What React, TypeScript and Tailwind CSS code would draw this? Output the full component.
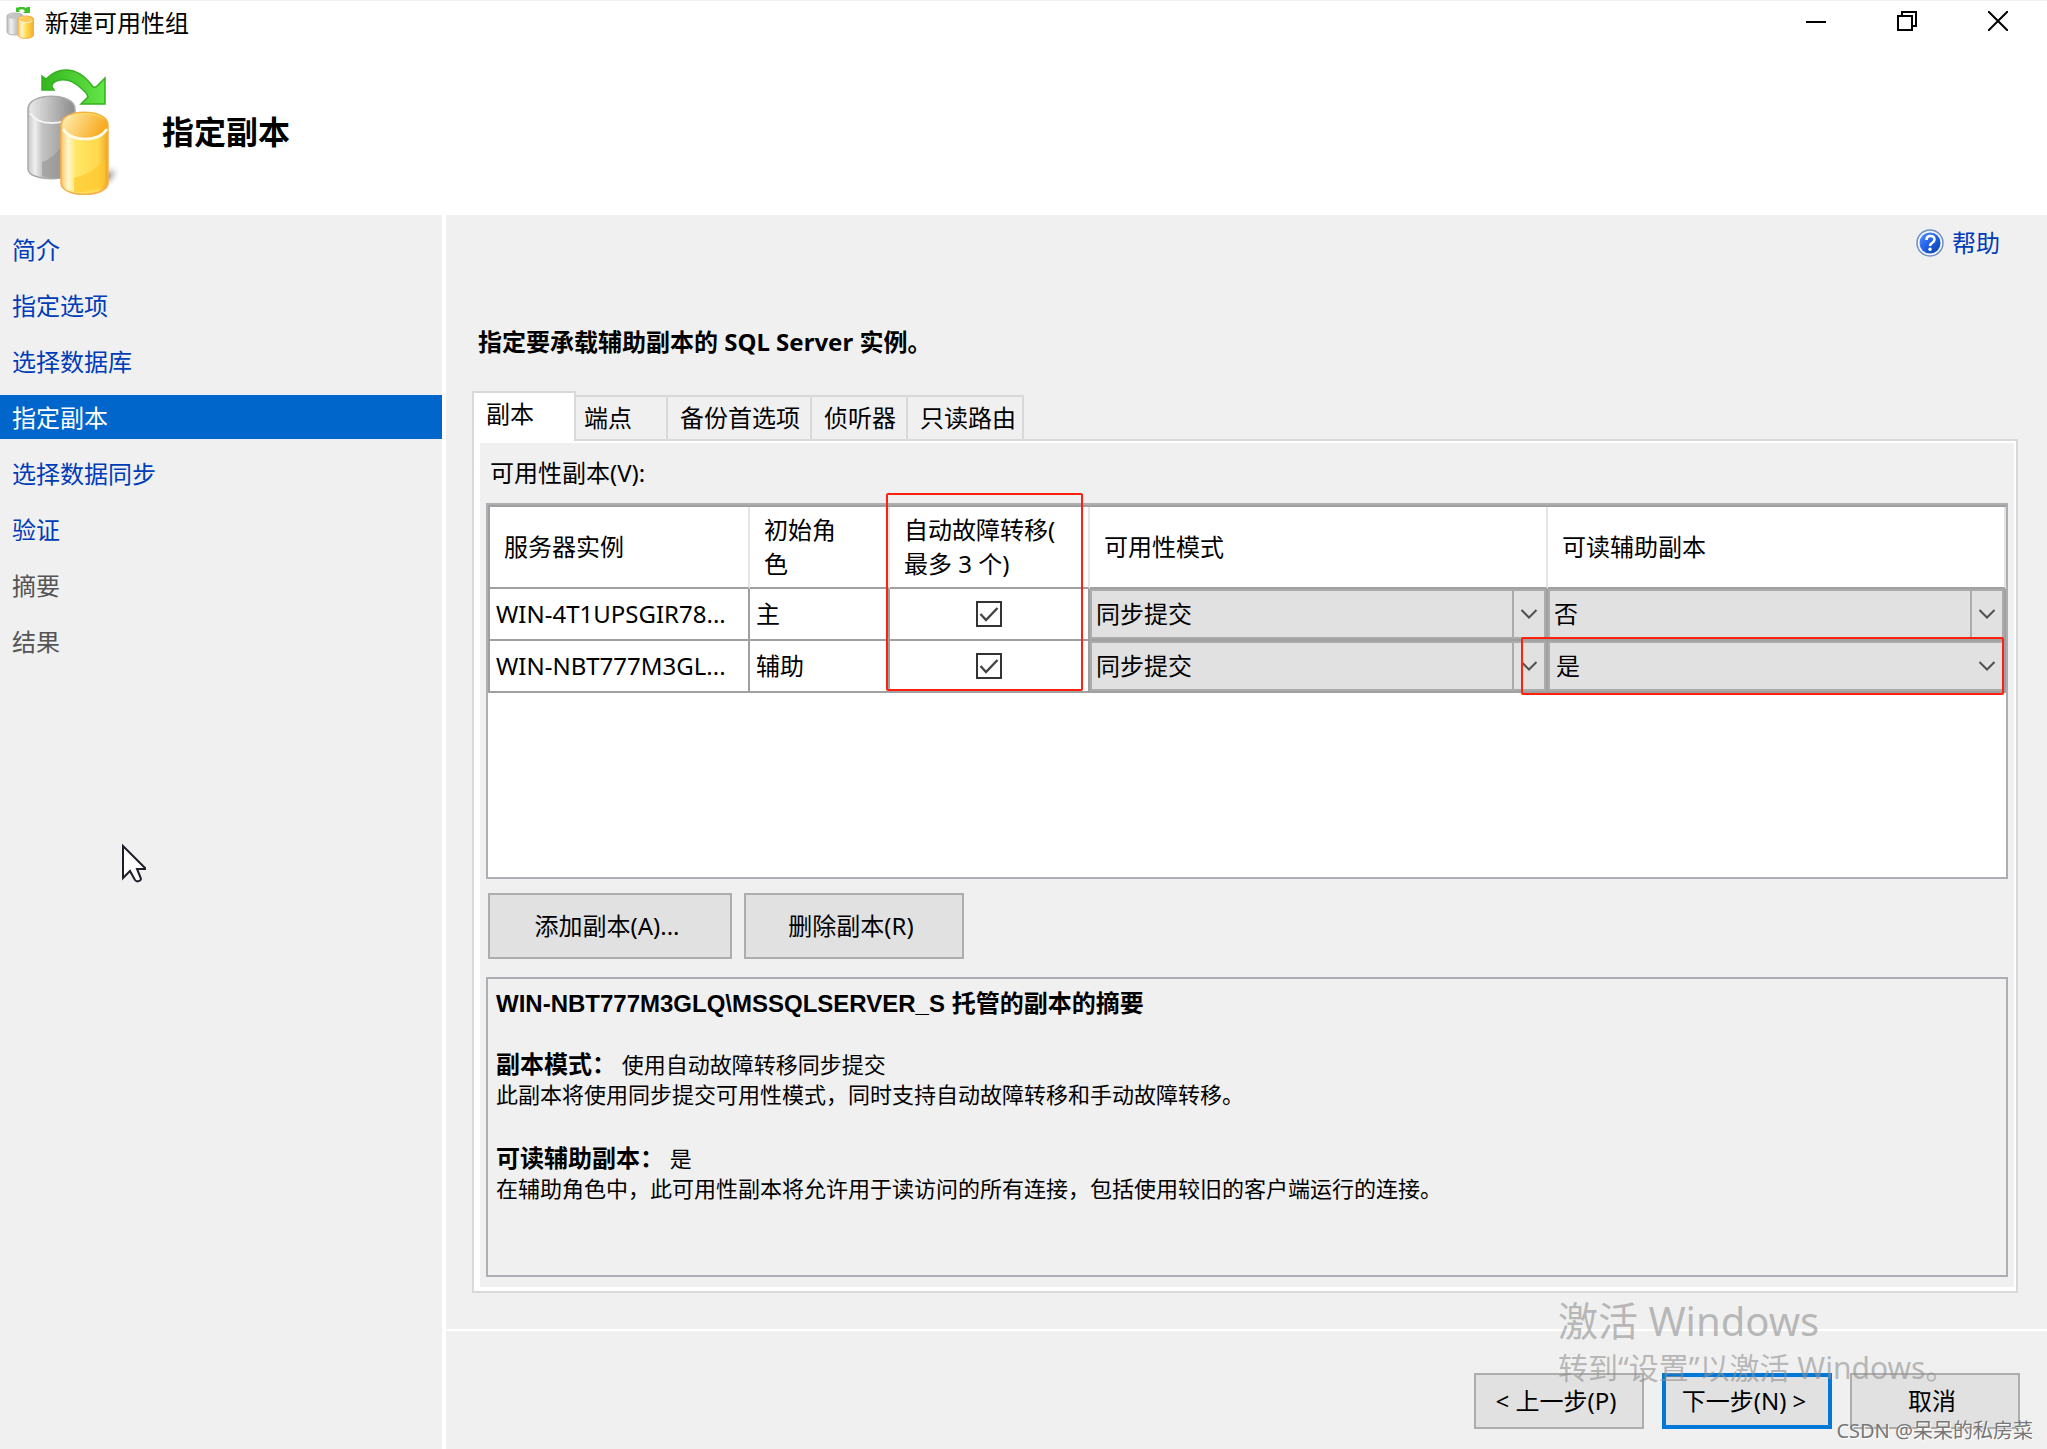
import { useState } from 'react'
import type { ReactNode } from 'react'
import clsx from 'clsx'

type StepState = 'link' | 'active' | 'pending'

const STEPS: { label: string; state: StepState }[] = [
  { label: '简介', state: 'link' },
  { label: '指定选项', state: 'link' },
  { label: '选择数据库', state: 'link' },
  { label: '指定副本', state: 'active' },
  { label: '选择数据同步', state: 'link' },
  { label: '验证', state: 'link' },
  { label: '摘要', state: 'pending' },
  { label: '结果', state: 'pending' },
]

const TABS = [
  { label: '副本', width: 'w-[104px]', pad: 'pl-3' },
  { label: '端点', width: 'w-[92px]', pad: 'pl-2' },
  { label: '备份首选项', width: 'w-[144px]', pad: 'pl-3' },
  { label: '侦听器', width: 'w-[96px]', pad: 'pl-3' },
  { label: '只读路由', width: 'w-[116px]', pad: 'pl-3' },
]

const REPLICAS = [
  { server: 'WIN-4T1UPSGIR78...', role: '主', mode: '同步提交', readable: '否' },
  { server: 'WIN-NBT777M3GL...', role: '辅助', mode: '同步提交', readable: '是' },
]

function AppIcon() {
  return (
    <svg width="28" height="32" viewBox="0 0 28 32" aria-hidden="true">
      <defs>
        <linearGradient id="sGray" x1="0" x2="1">
          <stop offset="0" stopColor="#b9b9b9" />
          <stop offset="0.250" stopColor="#f1f1f1" />
          <stop offset="0.500" stopColor="#cfcfcf" />
          <stop offset="1" stopColor="#a3a3a3" />
        </linearGradient>
        <linearGradient id="sGold" x1="0" x2="1">
          <stop offset="0" stopColor="#fcc568" />
          <stop offset="0.250" stopColor="#fff3c9" />
          <stop offset="0.500" stopColor="#ffdf57" />
          <stop offset="1" stopColor="#f7ae2c" />
        </linearGradient>
      </defs>
      <path d="M10 0v5h4l-1-2q4-2 6 1l-2 2h7V0h-3l-1 1l-2-1h-5l-2 1z" fill="#3fc02c" />
      <path d="M1 9c0-4 16-4 16 0v16c0 4-16 4-16 0z" fill="url(#sGray)" stroke="#b5b5b5" />
      <ellipse cx="9" cy="9.500" rx="7" ry="2.500" fill="#c4c4c4" />
      <path d="M12 12c0-4 15.500-4 15.500 0v16c0 4.500-15.500 4.500-15.500 0z" fill="url(#sGold)" stroke="#f3b04a" />
      <ellipse cx="19.700" cy="12.500" rx="6.500" ry="2.500" fill="#fbc95c" />
      <path d="M13 14q7 3.500 13.500 0" fill="none" stroke="#fff5d0" />
    </svg>
  )
}

function ReplicaIcon() {
  return (
    <svg width="96" height="132" viewBox="24 66 96 132" aria-hidden="true">
      <defs>
        <linearGradient id="grayBody" x1="0" x2="1">
          <stop offset="0" stopColor="#c9c9c9" />
          <stop offset="0.150" stopColor="#efefef" />
          <stop offset="0.300" stopColor="#c4c4c4" />
          <stop offset="1" stopColor="#8e8e8e" />
        </linearGradient>
        <linearGradient id="grayTop" x1="0" x2="1">
          <stop offset="0" stopColor="#e8e8e8" />
          <stop offset="1" stopColor="#8d8d8d" />
        </linearGradient>
        <linearGradient id="goldBody" x1="0" x2="1">
          <stop offset="0" stopColor="#fbc65c" />
          <stop offset="0.150" stopColor="#fff6cf" />
          <stop offset="0.320" stopColor="#ffe766" />
          <stop offset="0.800" stopColor="#ffd84c" />
          <stop offset="1" stopColor="#f2a427" />
        </linearGradient>
        <linearGradient id="goldTop" x1="0" x2="1" y2="0.300">
          <stop offset="0" stopColor="#fff0b5" />
          <stop offset="1" stopColor="#f8ac22" />
        </linearGradient>
        <linearGradient id="arrow" x1="0" x2="1">
          <stop offset="0" stopColor="#35b41e" />
          <stop offset="1" stopColor="#63e648" />
        </linearGradient>
        <radialGradient id="shade">
          <stop offset="0" stopColor="#6f6f6f" />
          <stop offset="1" stopColor="#ffffff" stopOpacity="0" />
        </radialGradient>
      </defs>
      <ellipse cx="106" cy="177" rx="17" ry="11" fill="url(#shade)" transform="rotate(-35 106 177)" />
      <path d="M28 109c0-17 47-17 47 0v60c0 13-47 13-47 0z" fill="url(#grayBody)" stroke="#ababab" strokeWidth="1.500" />
      <path d="M42 162q12-4 20-16v32q-12 1-20-2z" fill="#8b8b8b" opacity="0.500" />
      <ellipse cx="51.500" cy="109" rx="22" ry="12" fill="url(#grayTop)" />
      <path d="M30 113q6 10 22 10t22-10" fill="none" stroke="#f5f5f5" strokeWidth="2" />
      <path d="M61 125c0-17 47-17 47 0v58c0 15-47 15-47 0z" fill="url(#goldBody)" stroke="#f5b04a" strokeWidth="1.500" />
      <path d="M74 178q20-5 31-19v24q-8 10-31 9z" fill="#ffc62e" opacity="0.650" />
      <ellipse cx="84.500" cy="126" rx="22" ry="12" fill="url(#goldTop)" />
      <path d="M63 129q6 10 22 10t22-10" fill="none" stroke="#fffbe6" strokeWidth="2.500" />
      <path
        d="M42 76l4 3q9-9 20-9q15 0 27 17q2 1 4-1l8-8v26H81l7-7q-1-4-6-8q-11-11-22-9q-9 2-8 7l2 3H42z"
        fill="url(#arrow)"
        stroke="#35b01f"
        strokeWidth="1.500"
      />
    </svg>
  )
}

function HelpIcon() {
  return (
    <svg width="28" height="28" viewBox="0 0 28 28" aria-hidden="true">
      <defs>
        <linearGradient id="help" x1="0" y1="0" x2="1" y2="1">
          <stop offset="0" stopColor="#5b93ff" />
          <stop offset="0.500" stopColor="#1f5fe6" />
          <stop offset="1" stopColor="#0b3f9e" />
        </linearGradient>
      </defs>
      <circle cx="14" cy="14" r="13" fill="#f3f7ff" stroke="#6f8fc9" strokeWidth="1.500" />
      <circle cx="14" cy="14" r="10.500" fill="url(#help)" />
      <path d="M10.500 11q0-4 4-4t4 3.500q0 2-2.500 3.500q-2 1.300-2 3" fill="none" stroke="#fff" strokeWidth="2.600" />
      <circle cx="14" cy="20.300" r="1.700" fill="#fff" />
    </svg>
  )
}

function Chevron() {
  return (
    <svg width="18" height="12" viewBox="0 0 18 12" aria-hidden="true">
      <path d="M1.500 2l7.500 7.500L16.500 2" fill="none" stroke="#505050" strokeWidth="2" />
    </svg>
  )
}

function Combo({ label, value, options, flat }: { label: string; value: string; options: string[]; flat?: boolean }) {
  return (
    <div className="grid h-[50px] border-2 border-[#ababab] bg-[#e1e1e1]">
      <select
        aria-label={label}
        defaultValue={value}
        className={clsx(
          'col-start-1 row-start-1 w-full appearance-none bg-transparent text-2xl leading-8 outline-none',
          flat ? 'px-1.5' : 'px-1'
        )}
      >
        {options.map(o => <option key={o}>{o}</option>)}
      </select>
      <span
        className={clsx(
          'pointer-events-none col-start-1 row-start-1 flex w-8 items-center justify-center justify-self-end border-l-2',
          flat ? 'border-transparent' : 'border-[#ababab]'
        )}
      >
        <Chevron />
      </span>
    </div>
  )
}

function FailoverCheck({ label }: { label: string }) {
  return (
    <label className="mx-auto grid size-[26px]">
      <input
        type="checkbox"
        defaultChecked
        aria-label={label}
        className="peer col-start-1 row-start-1 size-[26px] appearance-none border-2 border-[#333] bg-white"
      />
      <svg
        className="pointer-events-none invisible col-start-1 row-start-1 peer-checked:visible"
        width="26"
        height="26"
        viewBox="0 0 26 26"
        aria-hidden="true"
      >
        <path d="M4.500 13l5.500 6L21.500 7" fill="none" stroke="#444" strokeWidth="2.400" />
      </svg>
    </label>
  )
}

function HeaderCell({ children, className }: { children: ReactNode; className?: string }) {
  return (
    <th
      scope="col"
      className={clsx(
        'h-[82px] border-r-2 border-b-2 border-r-[#e5e5e5] border-b-[#a0a0a0] py-0 text-left font-normal leading-[34px]',
        className
      )}
    >
      {children}
    </th>
  )
}

const cell = 'h-[52px] border-r-2 border-b-2 border-[#a0a0a0] p-0'

function ReplicaTable() {
  return (
    <table className="w-full table-fixed border-separate border-spacing-0 border-t-2 border-l-2 border-[#a0a0a0]">
      <colgroup>
        <col className="w-[260px]" />
        <col className="w-[140px]" />
        <col className="w-[200px]" />
        <col />
        <col />
      </colgroup>
      <thead>
        <tr>
          <HeaderCell className="pl-3.5">服务器实例</HeaderCell>
          <HeaderCell className="pr-10 pl-3.5">初始角色</HeaderCell>
          <HeaderCell className="relative pl-3.5">
            自动故障转移(<br />最多 3 个)
            {/* highlight round the whole failover column */}
            <span className="pointer-events-none absolute -top-3.5 -left-1 z-10 h-[198px] w-[197px] rounded-xs border-2 border-[#ff2010]" />
          </HeaderCell>
          <HeaderCell className="pl-3.5">可用性模式</HeaderCell>
          <HeaderCell className="pl-3.5">可读辅助副本</HeaderCell>
        </tr>
      </thead>
      <tbody>
        {REPLICAS.map((r, i) => (
          <tr key={r.server}>
            <td className={cell}><div className="px-1.5 whitespace-nowrap">{r.server}</div></td>
            <td className={cell}><div className="px-1.5">{r.role}</div></td>
            <td className={cell}><FailoverCheck label={`${r.server} 自动故障转移`} /></td>
            <td className={cell}>
              <Combo label="可用性模式" value={r.mode} options={['同步提交', '异步提交']} />
            </td>
            <td className={clsx(cell, 'relative')}>
              <Combo label="可读辅助副本" value={r.readable} options={['否', '是', '仅读意向']} flat={i === 1} />
              {i === 1 && (
                <span className="pointer-events-none absolute -top-1 right-0 -bottom-1 -left-[27px] z-10 rounded-xs border-2 border-[#ff2010]" />
              )}
            </td>
          </tr>
        ))}
      </tbody>
    </table>
  )
}

function PushButton({ children, className }: { children: ReactNode; className: string }) {
  return (
    <button type="button" className={clsx('bg-[#e1e1e1] pr-1.5 text-2xl leading-8 whitespace-nowrap', className)}>
      {children}
    </button>
  )
}

export default function App() {
  const [tab, setTab] = useState('副本')

  return (
    <div className="relative flex min-h-screen w-full flex-col overflow-hidden bg-[#f0f0f0] font-['Noto_Sans','Noto_Sans_CJK_SC',sans-serif] text-2xl leading-8 text-black">
      {/* Title bar and banner */}
      <header className="border-t border-[#f0f0f0] bg-white pb-[17px]">
        <div className="flex items-start justify-between pl-1.5">
          <div className="flex items-center gap-[11px] pt-1.5">
            <AppIcon />
            <span>新建可用性组</span>
          </div>
          <div className="flex pr-1">
            <button type="button" aria-label="最小化" className="flex h-10 w-[91px] items-center justify-center">
              <svg width="20" height="20" viewBox="0 0 20 20"><path d="M0 11h20" stroke="#000" strokeWidth="2" /></svg>
            </button>
            <button type="button" aria-label="还原" className="flex h-10 w-[91px] items-center justify-center">
              <svg width="20" height="20" viewBox="0 0 20 20" fill="none" stroke="#000" strokeWidth="2">
                <path d="M1 5h14v14H1zM5 5V1h14v14h-4" />
              </svg>
            </button>
            <button type="button" aria-label="关闭" className="flex h-10 w-[91px] items-center justify-center">
              <svg width="20" height="20" viewBox="0 0 20 20"><path d="M0 0l20 20M20 0L0 20" stroke="#000" strokeWidth="2" /></svg>
            </button>
          </div>
        </div>
        <div className="mt-[25px] flex items-center gap-[42px] pl-6">
          <ReplicaIcon />
          <h1 className="text-[32px] leading-10 font-bold">指定副本</h1>
        </div>
      </header>

      <div className="flex flex-1">
        {/* Wizard steps */}
        <nav className="w-[446px] shrink-0 border-r-4 border-white pt-3">
          <ul className="flex flex-col gap-3">
            {STEPS.map(s => (
              <li key={s.label}>
                <a
                  href="#"
                  className={clsx(
                    'block px-3 pt-[7px] pb-[5px]',
                    s.state === 'link' && 'text-[#003cb8]',
                    s.state === 'active' && 'bg-[#0066cc] text-white',
                    s.state === 'pending' && 'text-[#555]'
                  )}
                >
                  {s.label}
                </a>
              </li>
            ))}
          </ul>
        </nav>

        <div className="flex min-w-0 flex-1 flex-col">
          <main className="flex flex-1 flex-col pt-3 pr-[29px] pb-9 pl-[26px]">
            <a href="#" className="flex items-center gap-2 self-end pr-[18px] text-[#003cb8]">
              <HelpIcon />
              帮助
            </a>
            <h2 className="mt-[67px] pl-1.5 font-bold">指定要承载辅助副本的 SQL Server 实例。</h2>

            {/* Tabs */}
            <div role="tablist" className="mt-[33px] flex h-12 items-end">
              {TABS.map(t => (
                <button
                  key={t.label}
                  type="button"
                  role="tab"
                  aria-selected={tab === t.label}
                  onClick={() => setTab(t.label)}
                  className={clsx(
                    'border-[#d9d9d9] text-left whitespace-nowrap',
                    t.width,
                    t.pad,
                    tab === t.label
                      ? 'relative z-10 -mb-0.5 h-[50px] border-2 border-b-0 bg-white pb-1.5'
                      : 'h-11 border-t-2 border-r-2'
                  )}
                >
                  {t.label}
                </button>
              ))}
            </div>

            <div className="flex flex-1 flex-col border-2 border-[#d9d9d9] bg-white pt-0.5 pr-0.5 pb-1 pl-1.5">
              <div className="flex flex-1 flex-col bg-[#f0f0f0] px-1.5 pt-3.5 pb-2.5">
                <div className="pl-1">可用性副本(V):</div>
                <div className="mt-3.5 min-h-[376px] border-2 border-[#adadb3] bg-white">
                  <ReplicaTable />
                </div>

                <div className="mt-3.5 flex gap-3 pl-0.5">
                  <PushButton className="h-[66px] w-[244px] border-2 border-[#adadad]">添加副本(A)...</PushButton>
                  <PushButton className="h-[66px] w-[220px] border-2 border-[#adadad]">删除副本(R)</PushButton>
                </div>

                {/* Replica summary */}
                <section className="mt-[18px] min-h-[300px] flex-1 border-2 border-[#adadb3] px-2 py-2.5 text-[22px] leading-[30px]">
                  <h3 className="font-['Liberation_Sans','Noto_Sans_CJK_SC',sans-serif] text-2xl leading-[30px] font-bold">
                    WIN-NBT777M3GLQ\MSSQLSERVER_S 托管的副本的摘要
                  </h3>
                  <p className="mt-[30px]">
                    <b className="text-2xl leading-[30px]">副本模式：</b> 使用自动故障转移同步提交
                  </p>
                  <p>此副本将使用同步提交可用性模式，同时支持自动故障转移和手动故障转移。</p>
                  <p className="mt-[34px]">
                    <b className="text-2xl leading-[30px]">可读辅助副本：</b> 是
                  </p>
                  <p>在辅助角色中，此可用性副本将允许用于读访问的所有连接，包括使用较旧的客户端运行的连接。</p>
                </section>
              </div>
            </div>
          </main>

          <footer className="flex justify-end gap-[18px] border-t-2 border-white pt-[42px] pr-[27px] pb-5">
            <PushButton className="h-14 w-[170px] border-2 border-[#adadad]">&lt; 上一步(P)</PushButton>
            <PushButton className="h-14 w-[170px] border-4 border-[#0078d7]">下一步(N) &gt;</PushButton>
            <PushButton className="h-14 w-[170px] border-2 border-[#adadad]">取消</PushButton>
          </footer>
        </div>
      </div>

      {/* Overlays */}
      <div className="pointer-events-none absolute right-[98px] bottom-[60px] z-20 w-[391px] whitespace-nowrap text-[#909090]/60">
        <div className="text-[40px] leading-[52px]">激活 Windows</div>
        <div className="text-[30px] leading-[42px]">转到“设置”以激活 Windows。</div>
      </div>
      <div className="pointer-events-none absolute right-3.5 bottom-1 z-20 text-xl leading-7 whitespace-nowrap text-[#777] [text-shadow:1px_1px_0_#fff]">
        CSDN @呆呆的私房菜
      </div>
      <svg className="pointer-events-none absolute top-[844px] left-[121px] z-20" width="26" height="40" viewBox="0 0 26 40" aria-hidden="true">
        <path d="M2 2v32l7-7 5 9q2 2.500 5 .500q1.500-1 .500-3L16 25h8v-1z" fill="#fff" stroke="#1e1e2a" strokeWidth="2" />
      </svg>
    </div>
  )
}
